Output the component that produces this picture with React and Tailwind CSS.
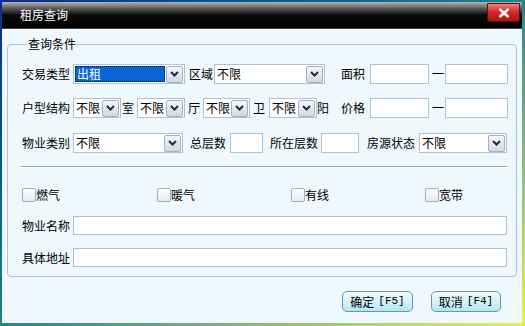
import React from 'react';

function Chevron() {
  return (
    <svg width="9" height="6" viewBox="0 0 9 6">
      <path d="M1 1 L4.5 4.5 L8 1" fill="none" stroke="#1b2b4e" strokeWidth="2" />
    </svg>
  );
}

function DropBtn() {
  return (
    <div className="mr-[1px] flex h-[17px] w-[17px] shrink-0 items-center justify-center rounded-[2px] border border-[#a3b1c5] bg-linear-to-b from-[#f6f7fa] to-[#d3d7e3]">
      <Chevron />
    </div>
  );
}

function Select({ className, value = '不限', active = false }) {
  return (
    <div className={`flex h-[20px] shrink-0 items-center border border-[#a9c4d4] bg-white ${className}`}>
      {active ? (
        <div className="ml-[1px] mr-[1px] flex h-[16px] flex-1 items-center border border-dotted border-[#111] bg-[#0a64d6] pl-[1px] text-white">
          {value}
        </div>
      ) : (
        <div className="flex-1 pl-[2px] leading-[18px]">{value}</div>
      )}
      <DropBtn />
    </div>
  );
}

function Input({ className }) {
  return <div className={`h-[20px] shrink-0 border border-[#a9c4d4] bg-white ${className}`} />;
}

function Check({ label }) {
  return (
    <div className="flex items-center">
      <div className="h-[14px] w-[14px] rounded-[2px] border border-[#94b4c4] bg-linear-to-b from-white to-[#e4ebf1]" />
      <span className="leading-[14px]">{label}</span>
    </div>
  );
}

function ActionButton({ label, keyName, className }) {
  return (
    <button className={`flex h-[21px] items-center justify-center rounded-[5px] border border-[#7393a4] bg-linear-to-b from-[#f4fcff] to-[#b2e6f6] ${className}`}>
      <span>{label}</span>
      <span className="ml-[4px] font-['Liberation_Mono',monospace] text-[11px]">[{keyName}]</span>
    </button>
  );
}

export default function App() {
  return (
    <div className="h-[326px] w-[525px] bg-linear-to-br from-[#0f2a8e] via-[#1a8589] to-[#eaf23c] pb-[3px] pl-[2px] pr-[3px] pt-[2px] font-['Noto_Sans_CJK_SC',sans-serif] text-[12px] text-black">
      <div className="flex h-full flex-col bg-[#eef8fd]">
        {/* Title bar */}
        <div className="flex h-[27px] shrink-0 items-start justify-between border-b border-[#4a4a4a] bg-[linear-gradient(to_bottom,#b4b4b4_0%,#5a5a5a_25%,#0a0a0a_50%,#000_100%)]">
          <span className="ml-[18px] mt-[6px] leading-[14px] text-white">租房查询</span>
          <div className="mr-[2px] mt-[1px] flex h-[19px] w-[33px] items-center justify-center rounded-b-[3px] border border-[#5a1010] bg-[linear-gradient(to_bottom,#f08080_0%,#d42a2a_45%,#b01414_100%)]">
            <svg width="12" height="10" viewBox="0 0 12 10">
              <path d="M1.5 1 L10.5 9 M10.5 1 L1.5 9" stroke="#fff" strokeWidth="2.6" />
            </svg>
          </div>
        </div>

        {/* Query fieldset */}
        <fieldset className="mx-[5px] mt-[8px] h-[240px] rounded-[4px] border border-[#a9c6d6] pb-[8px] pl-[14px] pt-[13px]">
          <legend className="ml-[5px] px-[1px] leading-[14px]">查询条件</legend>

          <div className="flex items-center">
            <span className="w-[48px]">交易类型</span>
            <Select className="ml-[3px] w-[112px]" value="出租" active />
            <span className="ml-[4px]">区域</span>
            <Select className="ml-[1px] w-[111px]" />
            <span className="ml-[16px]">面积</span>
            <Input className="ml-[5px] w-[59px]" />
            <span className="ml-[3px] w-[12px]">一</span>
            <Input className="ml-[1px] w-[63px]" />
          </div>

          <div className="mt-[14px] flex items-center">
            <span className="w-[48px]">户型结构</span>
            <Select className="ml-[3px] w-[48px]" />
            <span className="ml-[1px]">室</span>
            <Select className="ml-[3px] w-[48px]" />
            <span className="ml-[3px]">厅</span>
            <Select className="ml-[3px] w-[47px]" />
            <span className="ml-[3px]">卫</span>
            <Select className="ml-[4px] w-[48px]" />
            <span>阳</span>
            <span className="ml-[12px]">价格</span>
            <Input className="ml-[5px] w-[59px]" />
            <span className="ml-[3px] w-[12px]">一</span>
            <Input className="ml-[1px] w-[63px]" />
          </div>

          <div className="mt-[15px] flex items-center">
            <span className="w-[48px]">物业类别</span>
            <Select className="ml-[3px] w-[110px]" />
            <span className="ml-[7px]">总层数</span>
            <Input className="ml-[4px] w-[33px]" />
            <span className="ml-[7px]">所在层数</span>
            <Input className="ml-[3px] w-[38px]" />
            <span className="ml-[8px]">房源状态</span>
            <Select className="ml-[4px] w-[88px]" />
          </div>

          <div className="ml-[-1px] mt-[13px] w-[486px] border-b border-t border-b-white border-t-[#a0a4a8]" />

          <div className="mt-[20px] flex">
            <div className="w-[135px]"><Check label="燃气" /></div>
            <div className="w-[134px]"><Check label="暖气" /></div>
            <div className="w-[134px]"><Check label="有线" /></div>
            <Check label="宽带" />
          </div>

          <div className="mt-[14px] flex items-center">
            <span className="w-[48px]">物业名称</span>
            <div className="ml-[3px] h-[19px] w-[434px] border border-[#a9c4d4] bg-white" />
          </div>

          <div className="mt-[13px] flex items-center">
            <span className="w-[48px]">具体地址</span>
            <div className="ml-[3px] h-[19px] w-[434px] border border-[#a9c4d4] bg-white" />
          </div>
        </fieldset>

        {/* Actions */}
        <div className="mt-[14px] flex justify-end gap-[18px] pr-[21px]">
          <ActionButton className="w-[71px]" label="确定" keyName="F5" />
          <ActionButton className="w-[70px]" label="取消" keyName="F4" />
        </div>
      </div>
    </div>
  );
}
